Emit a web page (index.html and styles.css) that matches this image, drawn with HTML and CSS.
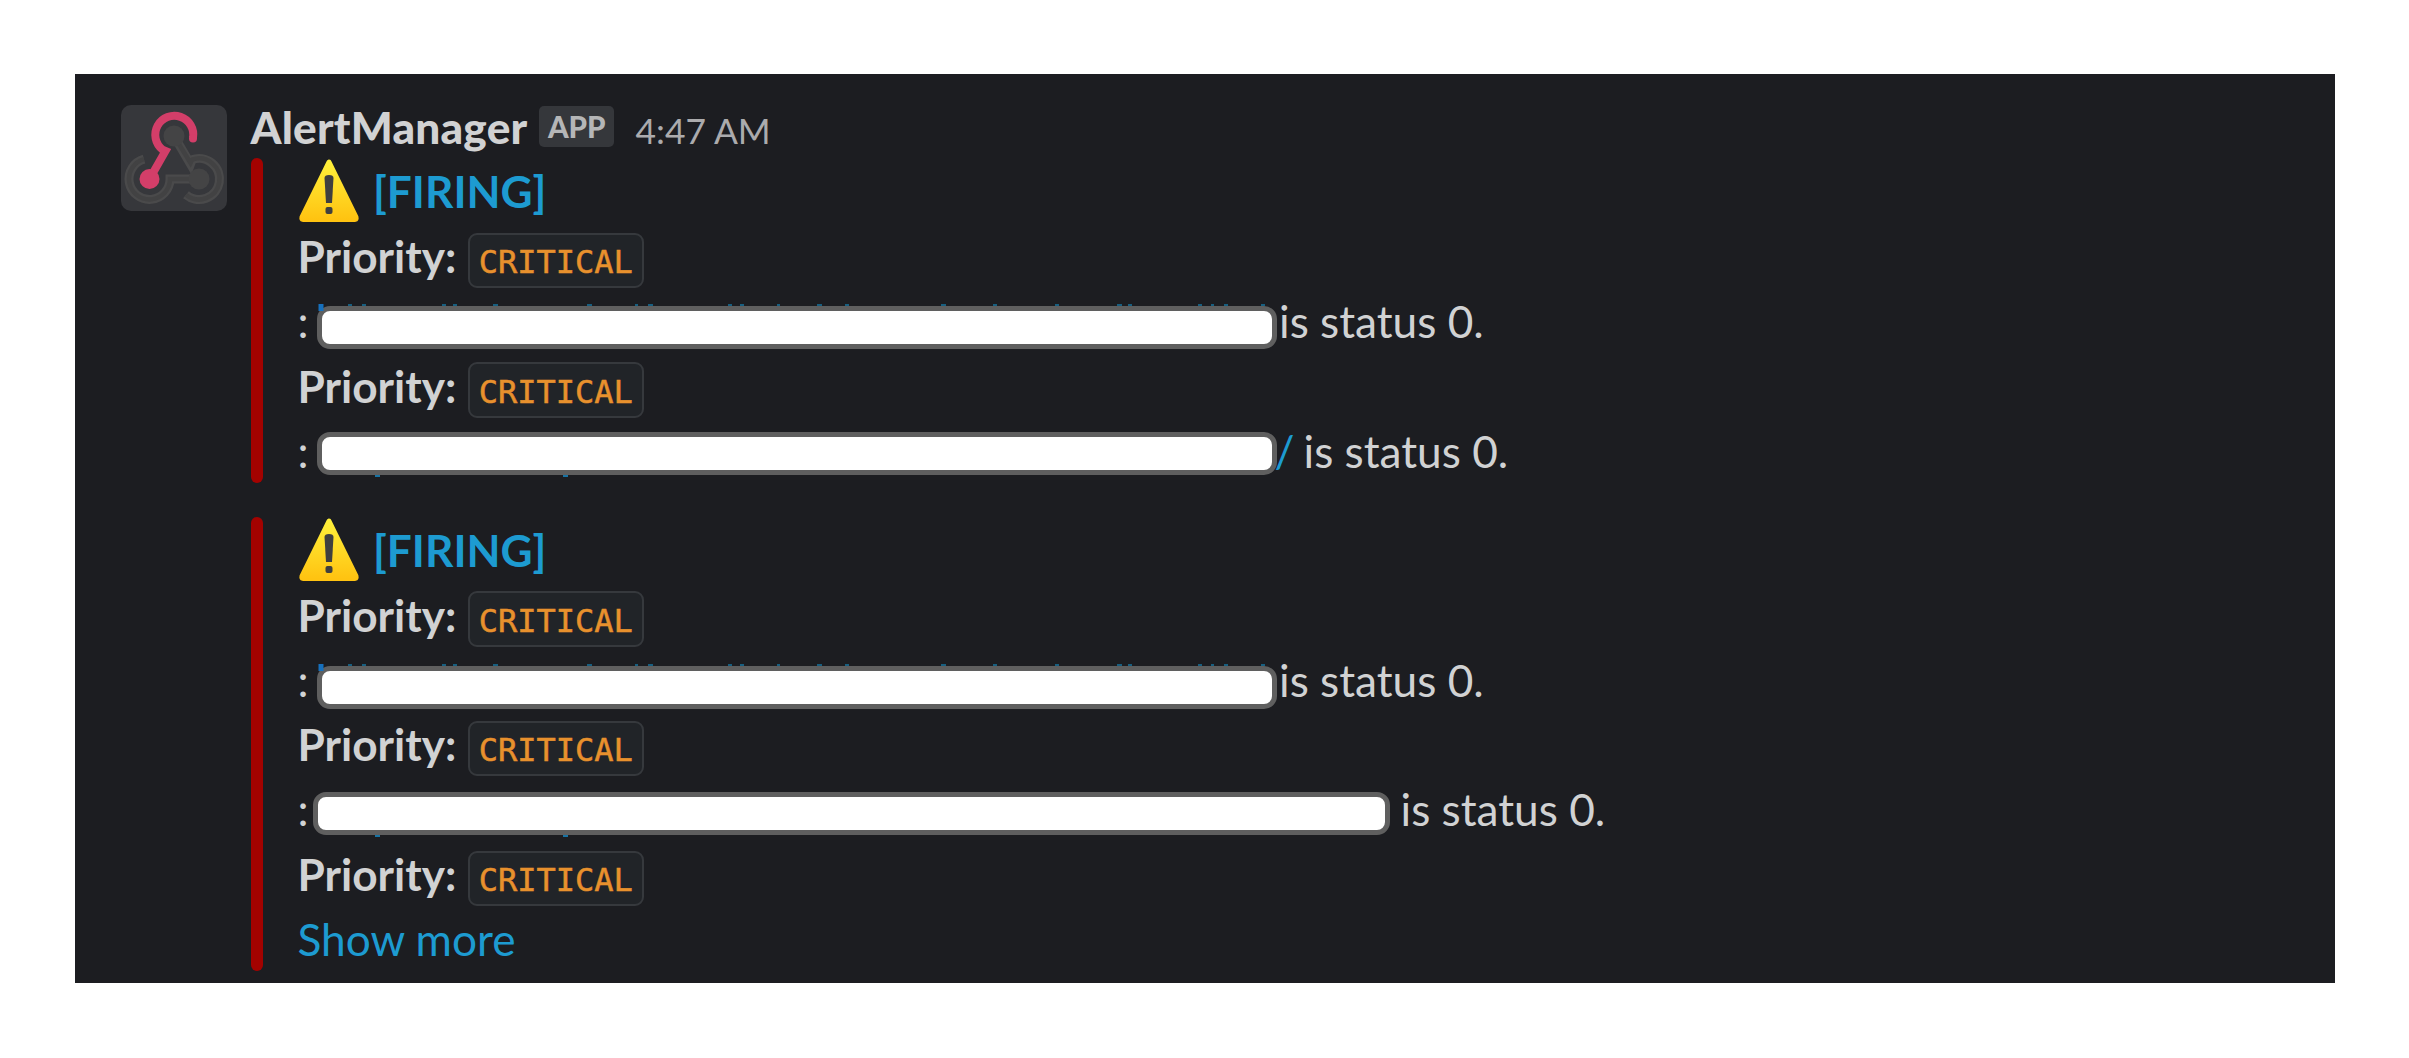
FILE: index.html
```
<!DOCTYPE html>
<html lang="en">
<head>
<meta charset="utf-8">
<title>AlertManager</title>
<link rel="stylesheet" href="styles.css">
</head>
<body>
<svg class="defs" width="0" height="0" aria-hidden="true">
  <defs>
    <linearGradient id="warn" x1="0" y1="0" x2="0" y2="1">
      <stop offset="0" stop-color="#fff03a"/>
      <stop offset="1" stop-color="#ffc311"/>
    </linearGradient>
    <symbol id="warning" viewBox="0 0 62 64">
      <path d="M31 4 L58 59 Q58.500 61 57 61.500 H5 Q3.500 61 4 59 Z" fill="url(#warn)" stroke="url(#warn)" stroke-width="5" stroke-linejoin="round"/>
      <path d="M26.500 20 Q26.500 17 31 17 Q35.500 17 35.500 20 L34 45 H28 Z" fill="#3f3f3f"/>
      <rect x="27.500" y="49" width="7" height="7" rx="2" fill="#3f3f3f"/>
    </symbol>
    <!-- slivers of the covered link that show along the cover's edge -->
    <symbol id="slivers-top" viewBox="0 0 960 8" overflow="visible">
      <path d="M4 0 V7" stroke="#1670bd" stroke-width="5"/>
      <path d="M31 1h4M45 1h4M125 1h4M136 1h4M176 1h5M270 1h5M318 1h3M331 1h5M411 1h4M423 1h4M460 1h3M500 1h5M528 1h4M624 1h5M676 1h4M738 1h4M800 1h5M811 1h4M881 1h4M894 1h3M907 1h4M944 1h4" stroke="#185f80" stroke-width="2"/>
    </symbol>
    <symbol id="slivers-bottom" viewBox="0 0 960 8" overflow="visible">
      <path d="M58 1h5M246 1h5" stroke="#1873a4" stroke-width="2"/>
    </symbol>
  </defs>
</svg>
<main class="message">
  <svg class="avatar" viewBox="0 0 106 106" role="img" aria-label="Webhook">
    <rect width="106" height="106" rx="10" fill="#36373b"/>
    <g fill="none" stroke="#4a4a4b" stroke-width="9">
      <path d="M53 31 L69.500 59 L71 54.700 A20.500 20.500 0 1 1 65 89.800"/>
      <path d="M78 74 H49 A20.500 20.500 0 1 1 23 54.200"/>
    </g>
    <g fill="none" stroke="#424243" stroke-width="4.500">
      <path d="M53 31 L69.500 58 L71 54.700 A20.500 20.500 0 1 1 65 89.800"/>
      <path d="M78 74 H49 A20.500 20.500 0 1 1 23 54.200"/>
    </g>
    <circle cx="53" cy="31" r="10.500" fill="#444445"/>
    <circle cx="78" cy="74" r="10.500" fill="#444445"/>
    <path d="M28.500 74 L44.500 46 L41.500 44.700 A19 19 0 1 1 72 33" fill="none" stroke="#d33e69" stroke-width="8"/>
    <circle cx="72" cy="33.500" r="4" fill="#d33e69"/>
    <circle cx="28.500" cy="74" r="10" fill="#d33e69"/>
  </svg>
  <div class="content">
    <header class="head">
      <strong class="name">AlertManager</strong><span class="badge">APP</span><time class="time">4:47 AM</time>
    </header>
    <section class="attachment">
      <div class="line title"><svg class="warning"><use href="#warning"/></svg><a class="link">[FIRING]</a></div>
      <div class="line"><b>Priority:</b> <code class="code">CRITICAL</code></div>
      <div class="line target"><span>:</span><span class="redacted"><svg class="slivers above"><use href="#slivers-top"/></svg></span><span class="status">is status 0.</span></div>
      <div class="line"><b>Priority:</b> <code class="code">CRITICAL</code></div>
      <div class="line target slash"><span>:</span><span class="redacted"><svg class="slivers below"><use href="#slivers-bottom"/></svg></span><a class="link tail">/</a><span class="status">is status 0.</span></div>
    </section>
    <section class="attachment">
      <div class="line title"><svg class="warning"><use href="#warning"/></svg><a class="link">[FIRING]</a></div>
      <div class="line"><b>Priority:</b> <code class="code">CRITICAL</code></div>
      <div class="line target lower"><span>:</span><span class="redacted"><svg class="slivers above"><use href="#slivers-top"/></svg></span><span class="status">is status 0.</span></div>
      <div class="line"><b>Priority:</b> <code class="code">CRITICAL</code></div>
      <div class="line target long"><span>:</span><span class="redacted"><svg class="slivers below"><use href="#slivers-bottom"/></svg></span><span class="status">is status 0.</span></div>
      <div class="line"><b>Priority:</b> <code class="code">CRITICAL</code></div>
      <div class="line"><a class="link">Show more</a></div>
    </section>
  </div>
</main>
</body>
</html>
```
FILE: styles.css
```
body {
  margin: 0;
  padding: 74px 75px;
  background: #fff;
  font: 44.2px/66.85px Lato, "Liberation Sans", sans-serif;
  color: #d1d2d3;
}
.defs { display: block; position: absolute; }
.message {
  box-sizing: border-box;
  height: 909px;
  width: 2259.5px;
  padding: 20px 46px 0 46px;
  display: flex;
  gap: 24px;
  background: #1c1d21;
  overflow: hidden;
}
.avatar { width: 106px; height: 106px; margin-top: 11px; flex: none; }
.content { flex: 1; margin-left: -.5px; }
.head { display: flex; align-items: baseline; height: 64.3px; white-space: nowrap; }
.name { font-weight: 900; letter-spacing: .2px; }
.badge {
  align-self: flex-start;
  margin: 11.5px 0 0 11.5px;
  padding: 0 8px 0 9px;
  height: 41px;
  line-height: 41px;
  border-radius: 5px;
  background: #35373b;
  color: #b5b6b7;
  font-size: 29.500px;
  font-weight: 900;
}
.time { margin-left: 22px; font-size: 35.400px; color: #ababad; }
.attachment {
  position: relative;
  padding-left: 47px;
  margin-bottom: 34.400px;
}
.attachment::before {
  content: "";
  position: absolute;
  left: 0;
  top: 0;
  bottom: 0;
  width: 12px;
  border-radius: 6px;
  background: #a30200;
}
.line { height: 64.85px; white-space: nowrap; }
.line b { font-weight: 700; }
.link { color: #1d9bd1; }
.title { display: flex; font-weight: 700; }
.warning { width: 62px; height: 64px; margin-right: 13.5px; }
.code {
  display: inline-block;
  box-sizing: border-box;
  height: 55.5px;
  width: 176px;
  padding: 1.5px 0 0 9px;
  border: 2px solid #36393d;
  border-radius: 9px;
  background: #212428;
  color: #e8912d;
  font: 32px/53px "DejaVu Sans Mono", monospace;
  -webkit-text-stroke: .5px #e8912d;
}
.target { display: flex; }
.redacted {
  position: relative;
  z-index: 1;
  box-sizing: border-box;
  width: 960px;
  height: 43px;
  margin: 18.3px 0 0 8.5px;
  border: 5px solid #5f5f5f;
  border-radius: 13px;
  background: #fff;
}
.slivers {
  position: absolute;
  left: -5px;
  width: 960px;
  height: 8px;
  z-index: -1;
}
.above { top: -7px; }
.below { bottom: -13px; }
.lower .redacted { margin-top: 19.5px; }
.slash .redacted { margin-top: 14.3px; }
.long .redacted { width: 1076.5px; margin: 15.6px 0 0 4.5px; }
.long .below { left: -1px; }
.status { margin-left: 2px; }
.tail { margin-left: -2.5px; }
.slash .status { margin-left: 9px; }
.long .status { margin-left: 11px; }
```
